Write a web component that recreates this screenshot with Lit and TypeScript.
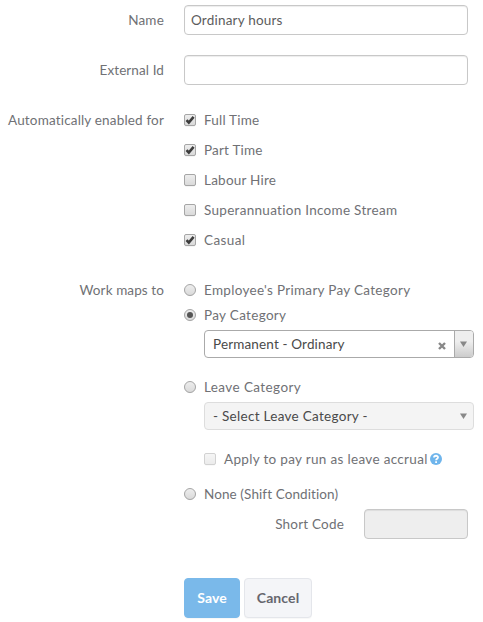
import { LitElement, html, css, svg, nothing } from "lit";
import { customElement, property } from "lit/decorators.js";

@customElement("check-mark")
class CheckMark extends LitElement {
  @property({ type: Boolean }) checked = false;
  @property({ type: Boolean }) faded = false;
  @property() kind = "box";
  static styles = css`
    :host { display: block; width: 12px; height: 12px; flex: none; }
    svg { display: block; overflow: visible; }
    .faded { opacity: 0.5; }
  `;
  render() {
    const shape = this.kind === "radio"
      ? svg`<circle cx="6" cy="6.5" r="5.7" fill="#000" opacity=".08"/>
            <circle cx="6" cy="6" r="5.5" fill="url(#g)" stroke="#a6a6a6"/>
            ${this.checked ? svg`<circle cx="6" cy="6" r="3" fill="#555"/>` : nothing}`
      : svg`<rect x="0.5" y="1.5" width="11" height="11" rx="1.5" fill="#000" opacity=".08"/>
            <rect x="0.5" y="0.5" width="11" height="11" rx="1.5" fill="url(#g)" stroke="#a6a6a6"/>
            ${this.checked ? svg`<path d="M2.5 6.2 L4.8 8.5 L9.6 2.9" fill="none" stroke="#3c3c3c" stroke-width="2.6"/>` : nothing}`;
    return html`<svg class=${this.faded ? "faded" : ""} width="12" height="12" viewBox="0 0 12 12">
      <defs><linearGradient id="g" x1="0" y1="0" x2="0" y2="1">
        <stop offset="0" stop-color="#eee"/><stop offset="1" stop-color="#d9d9d9"/>
      </linearGradient></defs>${shape}</svg>`;
  }
}

@customElement("app-root")
class AppRoot extends LitElement {
  static styles = css`
    :host {
      display: block; box-sizing: border-box; width: 483px; height: 622px; overflow: hidden;
      background: #fff; color: #707175; padding-top: 5px;
      font: 13.5px/20px Lato, "Liberation Sans", sans-serif;
    }
    .row { display: grid; grid-template-columns: 164px 1fr; column-gap: 20px; }
    .label { text-align: right; line-height: 30px; white-space: nowrap; }
    .field { margin-bottom: 20px; }
    .input {
      box-sizing: border-box; width: 284px; height: 30px; border: 1px solid #c8c8c8; border-radius: 4px;
      box-shadow: inset 0 1px 1px rgba(0,0,0,.075); padding: 0 6px; line-height: 28px; color: #5c5c5c;
    }
    .option { display: flex; align-items: center; gap: 8px; height: 30px; white-space: nowrap; }
    .maps { margin-top: 23px; }
    .maps .label { line-height: 24px; }
    .maps .option { height: 24px; margin-bottom: 1px; }
    .select {
      box-sizing: border-box; width: 270px; height: 28px; margin: 3px 0 17px 20px; display: flex; align-items: center;
      border: 1px solid #aaa; border-radius: 4px; padding-left: 8px; color: #4a4a4a; overflow: hidden;
    }
    .select.off { background: #f4f4f4; border-color: #ddd; }
    .value { flex: 1; }
    .clear { display: block; margin: 3px 8px 0 0; }
    .arrow {
      box-sizing: border-box; width: 19px; height: 26px; padding-right: 1px; border-left: 1px solid #aaa;
      display: flex; align-items: center; justify-content: center;
      background: linear-gradient(to top, #ccc 0%, #eee 60%);
    }
    .off .arrow { background: none; border-color: transparent; }
    .maps .accrual { margin: 0 0 11px 20px; }
    .help { margin-left: -6px; }
    .short { display: grid; grid-template-columns: 160px 104px; column-gap: 20px; margin-top: 3px; }
    .maps .short .label { line-height: 30px; }
    .short .input { width: 104px; background: #eee; }
    .actions { display: flex; gap: 4px; margin: 39px 0 0 184px; }
    .button {
      box-sizing: border-box; height: 40px; border: 1px solid #e4e6eb; border-radius: 4px; background: #f4f5f8;
      width: 68px; font: bold 14px/38px Lato, sans-serif; color: #66666e; padding: 0; text-align: center;
      letter-spacing: .1px; box-shadow: 0 1px 1px rgba(0,0,0,.03);
    }
    .primary { width: 56px; background: #7ab9ea; border-color: #7ab9ea; color: #fff; }
  `;

  private option(text: string, spacing: number, checked = false, kind = "box") {
    return html`<div class="option"><check-mark .kind=${kind} .checked=${checked}></check-mark>${this.text(text, spacing)}</div>`;
  }
  private text(value: string, spacing: number) {
    return html`<span style="letter-spacing:${spacing}px">${value}</span>`;
  }
  private arrow() {
    return html`<span class="arrow"><svg width="7" height="6" viewBox="0 0 7 6"><path d="M0 .5H7L3.5 6Z" fill="#888"/></svg></span>`;
  }

  render() {
    return html`
      <div class="row field"><div class="label">${this.text("Name", 0.2)}</div><div class="input">${this.text("Ordinary hours", 0.2)}</div></div>
      <div class="row field"><div class="label">${this.text("External Id", 0.1)}</div><div class="input"></div></div>
      <div class="row">
        <div class="label">${this.text("Automatically enabled for", 0.17)}</div>
        <div>
          ${this.option("Full Time", 0.2, true)}
          ${this.option("Part Time", 0.2, true)}
          ${this.option("Labour Hire", 0.23)}
          ${this.option("Superannuation Income Stream", 0.29)}
          ${this.option("Casual", 0.4, true)}
        </div>
      </div>
      <div class="row maps">
        <div class="label">${this.text("Work maps to", 0.1)}</div>
        <div>
          ${this.option("Employee's Primary Pay Category", 0.3, false, "radio")}
          ${this.option("Pay Category", 0.32, true, "radio")}
          <div class="select">
            <span class="value">${this.text("Permanent - Ordinary", 0.15)}</span>
            <svg class="clear" width="8" height="8" viewBox="0 0 8 8"><path d="M1 1L7 7M7 1L1 7" stroke="#888" stroke-width="2.4"/></svg>
            ${this.arrow()}
          </div>
          ${this.option("Leave Category", 0.4, false, "radio")}
          <div class="select off"><span class="value">${this.text("- Select Leave Category -", 0.29)}</span>${this.arrow()}</div>
          <div class="option accrual">
            <check-mark faded></check-mark>${this.text("Apply to pay run as leave accrual", 0.32)}
            <svg class="help" width="12" height="12" viewBox="0 0 12 12"><circle cx="6" cy="6" r="6" fill="#6fb5ec"/><path d="M4 4.5C4.1 2.2 8 2.2 8 4.4C8 5.8 6.1 5.7 6.1 7.2M6.1 8.3V9.9" fill="none" stroke="#fff" stroke-width="1.8"/></svg>
          </div>
          ${this.option("None (Shift Condition)", 0.1, false, "radio")}
          <div class="short"><div class="label">${this.text("Short Code", 0.2)}</div><div class="input"></div></div>
        </div>
      </div>
      <div class="actions"><button class="button primary">Save</button><button class="button">Cancel</button></div>
    `;
  }
}
